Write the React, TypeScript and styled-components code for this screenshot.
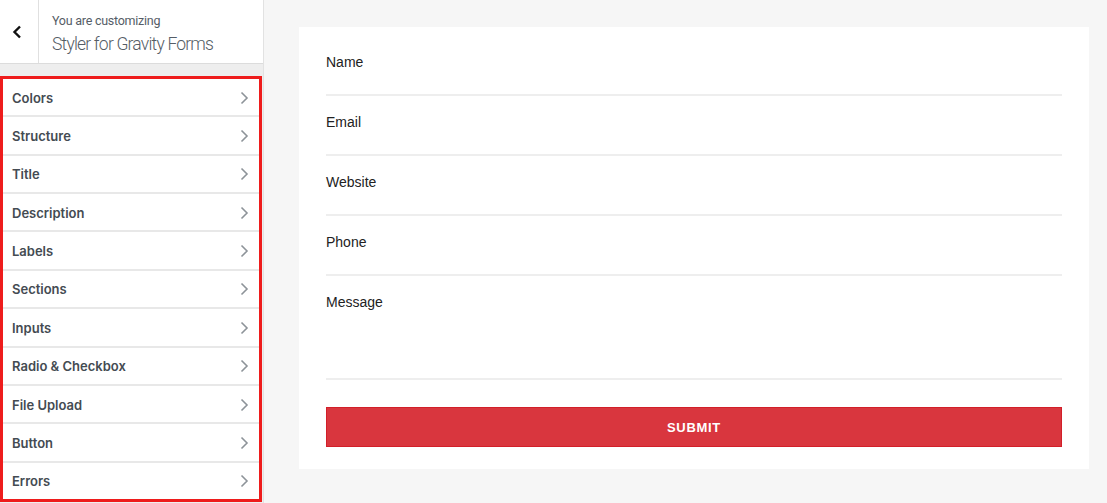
import React from "react";
import styled, { createGlobalStyle } from "styled-components";

const Global = createGlobalStyle`
  html, body { margin: 0; padding: 0; }
  body { background: #f6f6f6; width: 1107px; height: 503px; overflow: hidden; }
  * { box-sizing: border-box; }
`;

const Page = styled.div`
  display: flex;
  width: 1107px;
  height: 503px;
  background: #f6f6f6;
`;

const Sidebar = styled.aside`
  width: 264px;
  flex: none;
  background: #eeeeee;
  border-right: 1px solid #e2e2e2;
  display: flex;
  flex-direction: column;
  font-family: Inter, "Noto Sans", sans-serif;
`;

const Header = styled.div`
  height: 64px;
  display: flex;
  background: #fff;
  border-bottom: 1px solid #dcdcdc;
`;

const BackButton = styled.div`
  width: 39px;
  flex: none;
  display: flex;
  align-items: center;
  justify-content: center;
  border-right: 1px solid #e0e0e0;
  padding-right: 4px;
`;

const HeaderText = styled.div`
  display: flex;
  flex-direction: column;
  padding: 13px 0 0 13px;
  font-family: Roboto, "Noto Sans", sans-serif;
`;

const Small = styled.span`
  font-size: 12.5px;
  color: #555d66;
  line-height: 16px;
  letter-spacing: -0.25px;
`;

const Big = styled.span`
  font-size: 17.5px;
  font-weight: 300;
  color: #555d66;
  line-height: 22px;
  margin-top: 4px;
  letter-spacing: -0.8px;
`;

const Gap = styled.div`
  height: 12px;
`;

const Menu = styled.ul`
  list-style: none;
  margin: 0;
  padding: 0;
  width: 262px;
  height: 426px;
  border: 3px solid #ee1c1c;
  background: #fff;
  display: flex;
  flex-direction: column;
`;

const Item = styled.li`
  flex: 1;
  display: flex;
  align-items: center;
  justify-content: space-between;
  padding: 1px 10px 0 9px;
  border-bottom: 2px solid #e8e8e8;
  font-size: 13px;
  font-weight: 600;
  color: #444b52;
  &:last-child { border-bottom: none; }
`;

const Main = styled.main`
  flex: 1;
  padding: 27px 18px 34px 35px;
  font-family: "Liberation Sans", Arial, sans-serif;
`;

const Card = styled.form`
  background: #fff;
  height: 442px;
  padding: 27px 27px 22px 27px;
  display: flex;
  flex-direction: column;
`;

const Field = styled.div<{ $tall?: boolean }>`
  display: flex;
  flex-direction: column;
  height: ${(p) => (p.$tall ? "86px" : "60px")};
`;

const Label = styled.label`
  font-size: 14px;
  color: #222;
  line-height: 16px;
`;

const Input = styled.div<{ $tall?: boolean }>`
  height: ${(p) => (p.$tall ? "70px" : "26px")};
  border-bottom: 2px solid #eeeeee;
`;

const Submit = styled.button`
  margin-top: 27px;
  height: 40px;
  background: #d9363e;
  border: 1px solid #d21f29;
  color: #fff;
  font-family: "Liberation Sans", Arial, sans-serif;
  font-weight: 700;
  font-size: 13px;
  letter-spacing: 0.7px;
  padding: 0;
`;

const items = [
  "Colors",
  "Structure",
  "Title",
  "Description",
  "Labels",
  "Sections",
  "Inputs",
  "Radio & Checkbox",
  "File Upload",
  "Button",
  "Errors",
];

const Chevron = () => (
  <svg width="9" height="14" viewBox="0 0 9 14">
    <polyline points="1.5,1.5 7,7 1.5,12.5" fill="none" stroke="#8d9399" strokeWidth="1.6" />
  </svg>
);

const BackIcon = () => (
  <svg width="10" height="14" viewBox="0 0 10 14">
    <polyline points="8,1.5 2.5,7 8,12.5" fill="none" stroke="#111" strokeWidth="2.4" />
  </svg>
);

const fields = ["Name", "Email", "Website", "Phone"];

export default function App() {
  return (
    <>
      <Global />
      <Page>
        <Sidebar>
          <Header>
            <BackButton>
              <BackIcon />
            </BackButton>
            <HeaderText>
              <Small>You are customizing</Small>
              <Big>Styler for Gravity Forms</Big>
            </HeaderText>
          </Header>
          <Gap />
          <Menu>
            {items.map((it) => (
              <Item key={it}>
                {it}
                <Chevron />
              </Item>
            ))}
          </Menu>
        </Sidebar>
        <Main>
          <Card onSubmit={(e) => e.preventDefault()}>
            {fields.map((f) => (
              <Field key={f}>
                <Label>{f}</Label>
                <Input />
              </Field>
            ))}
            <Field $tall>
              <Label>Message</Label>
              <Input $tall />
            </Field>
            <Submit type="submit">SUBMIT</Submit>
          </Card>
        </Main>
      </Page>
    </>
  );
}
